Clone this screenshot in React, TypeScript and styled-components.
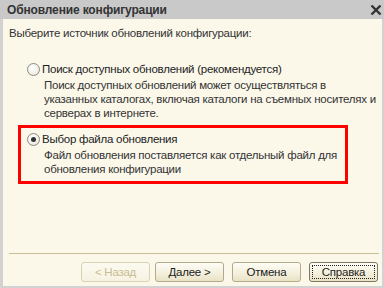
import React from "react";
import styled, { createGlobalStyle } from "styled-components";

const Global = createGlobalStyle`
  html, body { margin: 0; padding: 0; background: #d2d2d2; }
  body { font-family: "Liberation Sans", Arial, sans-serif; }
`;

const Frame = styled.div`
  width: 384px;
  height: 288px;
  display: flex;
  flex-direction: column;
  background: #d2d2d2;
  box-sizing: border-box;
`;

const TitleBar = styled.div`
  height: 19px;
  flex: none;
  display: flex;
  align-items: center;
  justify-content: space-between;
  padding: 0 2px 0 7px;
  background: #c9c9c9;
  font-weight: bold;
  font-size: 12px;
  letter-spacing: -0.15px;
  color: #333;
`;

const Body = styled.div`
  flex: 1;
  margin: 0 2px 2px 3px;
  background: #fbf8ea;
  display: flex;
  flex-direction: column;
  padding: 7px 2px 4px 6px;
  font-size: 11.5px;
  letter-spacing: -0.25px;
  line-height: 14px;
  color: #333;
`;

const Prompt = styled.div`
  margin-bottom: 22px;
`;

const Option = styled.div<{ $marked?: boolean }>`
  margin-left: ${(p) => (p.$marked ? "9px" : "18px")};
  padding: ${(p) => (p.$marked ? "4px 0 5px 6px" : "0")};
  border: ${(p) => (p.$marked ? "3px solid #ff0000" : "none")};
  width: ${(p) => (p.$marked ? "330px" : "auto")};
  box-sizing: border-box;
  margin-top: ${(p) => (p.$marked ? "5px" : "0")};
`;

const RadioRow = styled.div`
  display: flex;
  align-items: center;
  height: 14px;
  color: #222;
  white-space: nowrap;
`;

const RadioCircle = styled.span<{ $checked?: boolean }>`
  width: 13px;
  height: 13px;
  box-sizing: border-box;
  border-radius: 50%;
  border: 1px solid #8a8a82;
  background: radial-gradient(circle at 40% 35%, #ffffff 0%, #f2f0e6 60%, #dcd9cc 100%);
  display: flex;
  align-items: center;
  justify-content: center;
  margin-right: 2px;
  flex: none;
  &::after {
    content: "";
    display: ${(p) => (p.$checked ? "block" : "none")};
    width: 5px;
    height: 5px;
    border-radius: 50%;
    background: #333;
  }
`;

const Description = styled.div`
  margin: 2px 0 0 17px;
  color: #333;
  white-space: nowrap;
`;

const Spacer = styled.div`
  flex: 1;
`;

const Separator = styled.div`
  height: 1px;
  background: #c9bd94;
  margin-right: 1px;
`;

const ButtonRow = styled.div`
  display: flex;
  justify-content: flex-end;
  padding-top: 8px;
  padding-right: 2px;
`;

const Button = styled.button<{ $gap?: number; $focused?: boolean }>`
  width: 69px;
  height: 20px;
  margin-left: ${(p) => p.$gap ?? 0}px;
  border: 1px solid ${(p) => (p.$focused ? "#7d7862" : "#b3aa8a")};
  border-radius: 3px;
  background: linear-gradient(#fefdf6, #f4f0dd 55%, #e9e2c6);
  font-family: "Liberation Sans", Arial, sans-serif;
  font-size: 11.5px;
  letter-spacing: -0.25px;
  color: #222;
  padding: 0;
  position: relative;
  &:disabled {
    color: #cbbb92;
    border-color: #d9d1b6;
    background: linear-gradient(#fcfaf0, #f6f2e2);
  }
`;

const FocusRect = styled.span`
  position: absolute;
  inset: 2px;
  border: 1px dotted #222;
`;

export default function App() {
  return (
    <Frame>
      <Global />
      <TitleBar>
        <span>Обновление конфигурации</span>
        <svg width="12" height="12" viewBox="0 0 12 12">
          <path d="M1.5 1.5 L10.5 10.5 M10.5 1.5 L1.5 10.5" stroke="#333" strokeWidth="2.4" />
        </svg>
      </TitleBar>
      <Body>
        <Prompt>Выберите источник обновлений конфигурации:</Prompt>
        <Option>
          <RadioRow>
            <RadioCircle />
            Поиск доступных обновлений (рекомендуется)
          </RadioRow>
          <Description>
            Поиск доступных обновлений может осуществляться в
            <br />
            указанных каталогах, включая каталоги на съемных носителях и
            <br />
            серверах в интернете.
          </Description>
        </Option>
        <Option $marked>
          <RadioRow>
            <RadioCircle $checked />
            Выбор файла обновления
          </RadioRow>
          <Description>
            Файл обновления поставляется как отдельный файл для
            <br />
            обновления конфигурации
          </Description>
        </Option>
        <Spacer />
        <Separator />
        <ButtonRow>
          <Button disabled>&lt; Назад</Button>
          <Button $gap={5}>Далее &gt;</Button>
          <Button $gap={8}>Отмена</Button>
          <Button $gap={8} $focused>
            <FocusRect />
            Справка
          </Button>
        </ButtonRow>
      </Body>
    </Frame>
  );
}
